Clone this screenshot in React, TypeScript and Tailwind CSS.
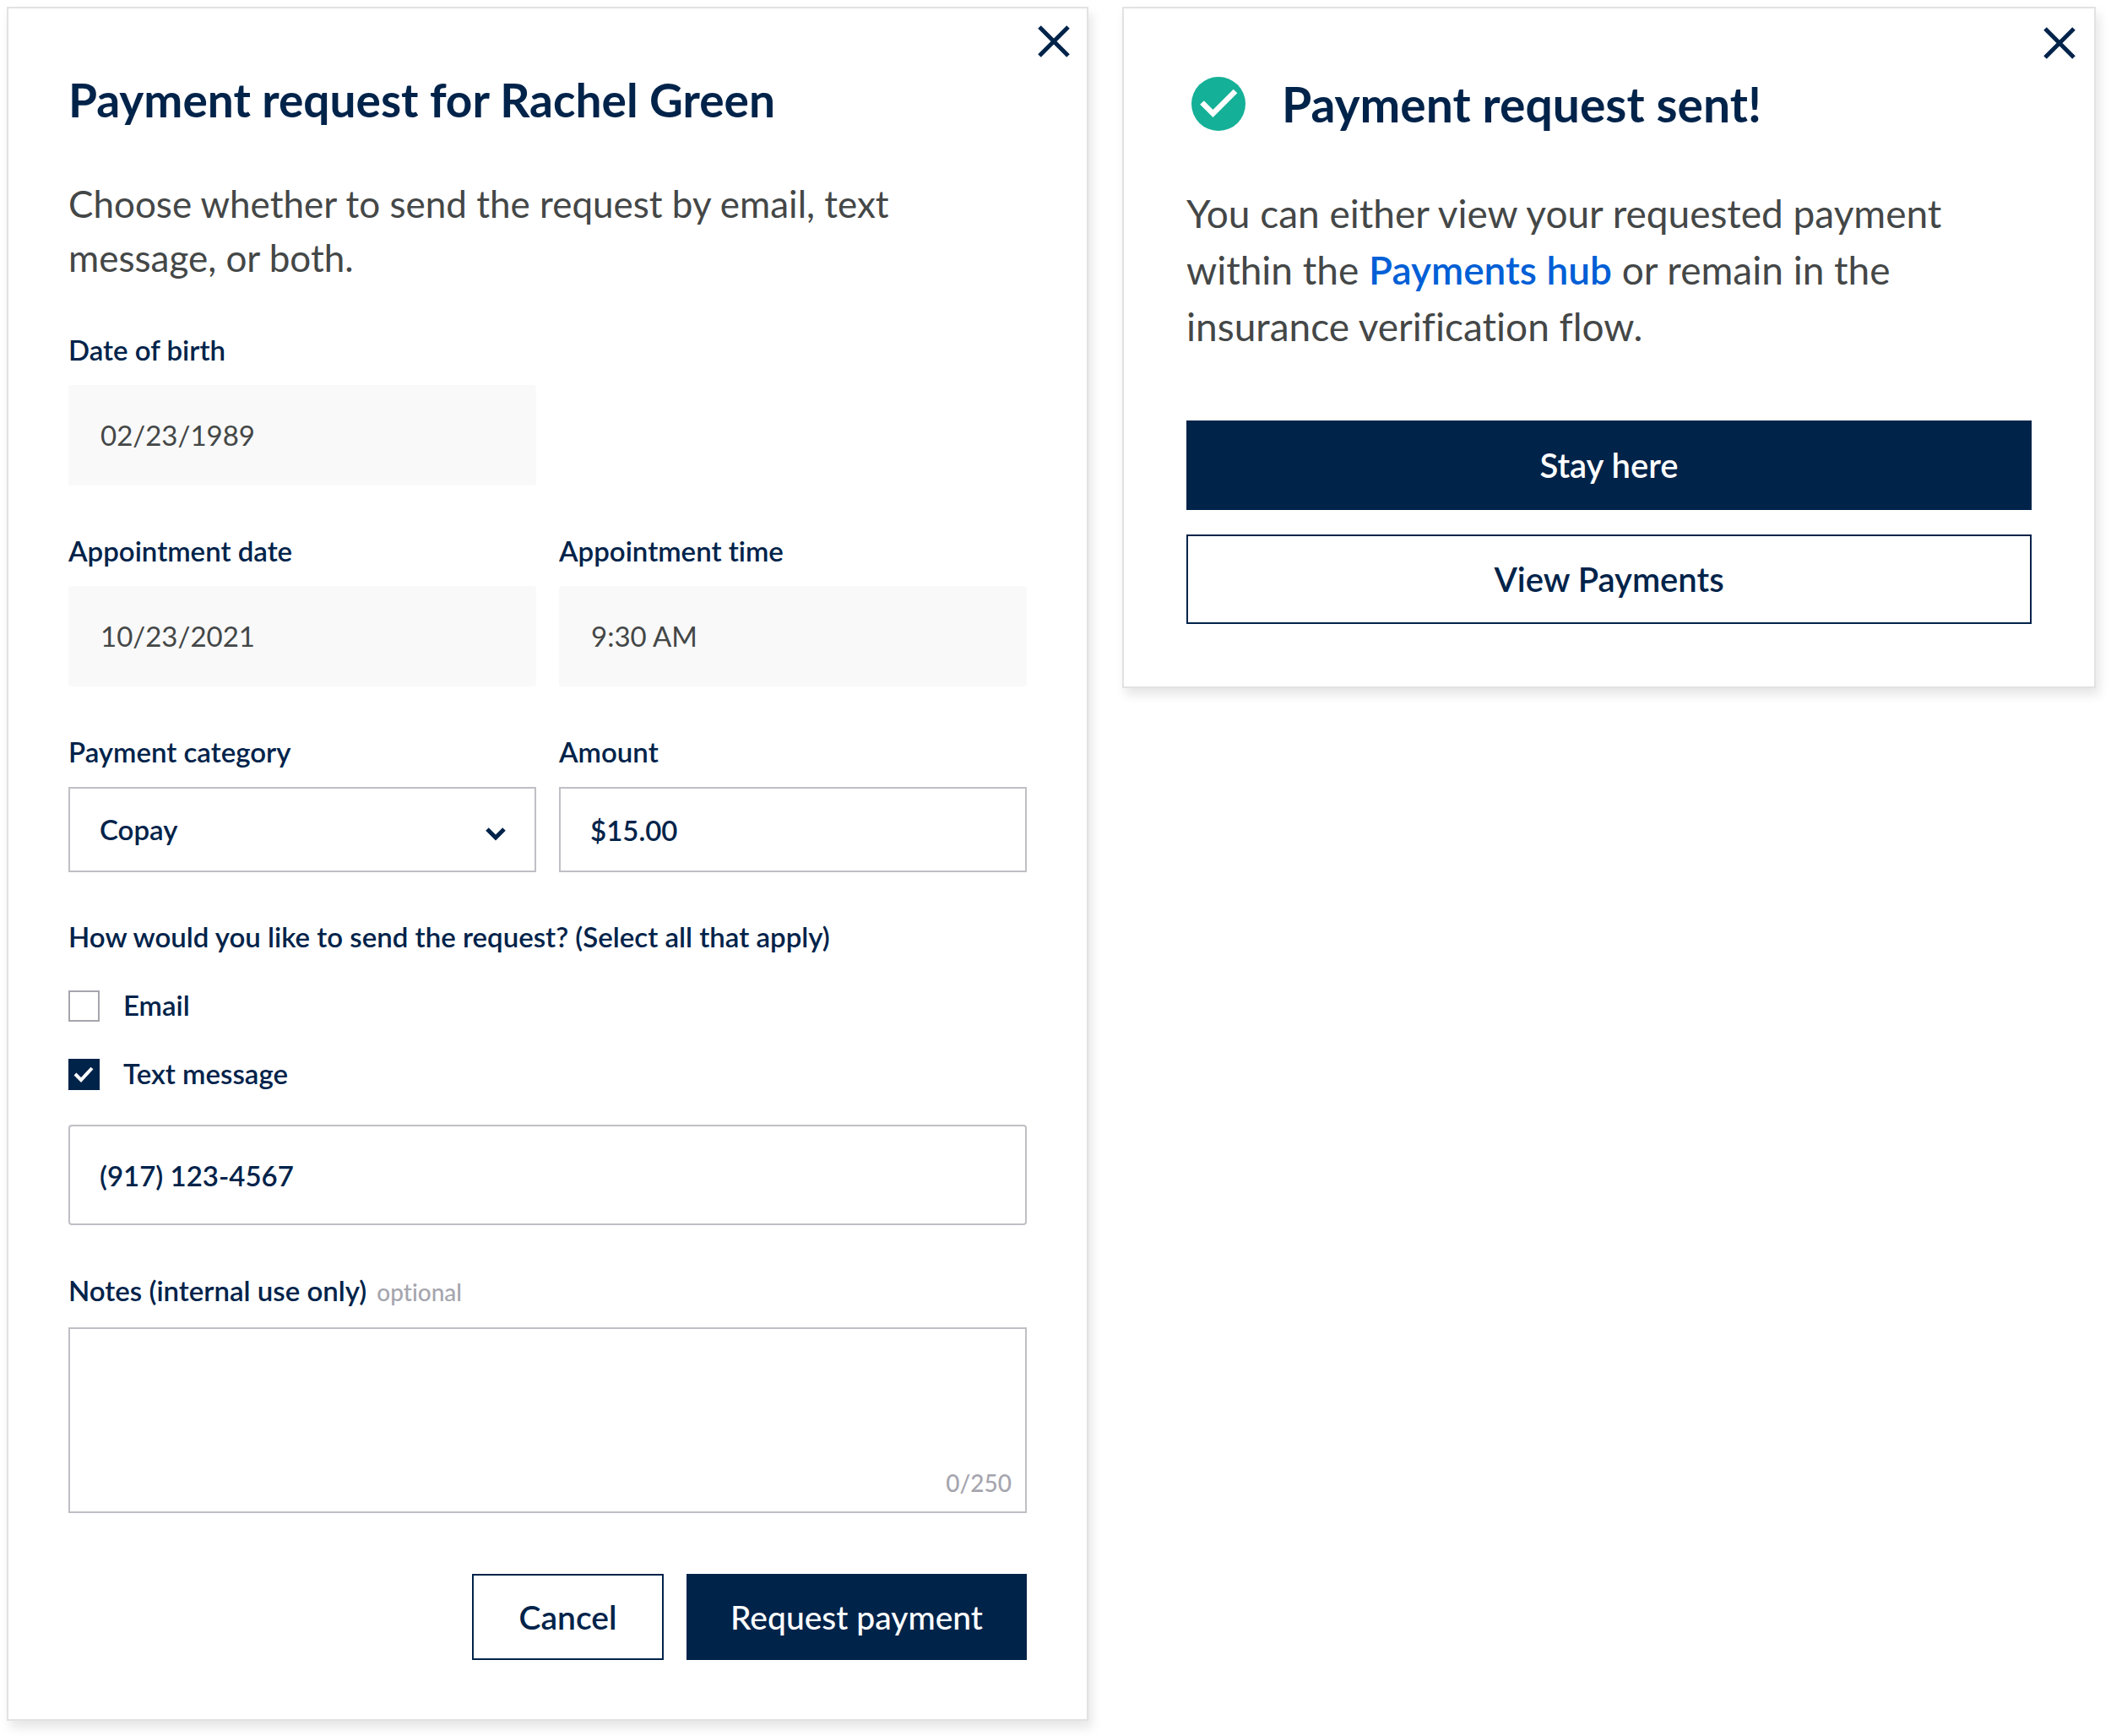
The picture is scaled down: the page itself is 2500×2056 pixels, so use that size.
import { useState, type ReactNode } from 'react'

const READONLY =
  'h-[119px] w-full rounded-[4px] bg-[#f9f9f9] px-[38px] pb-0.5 text-[33px] text-[#444747] outline-none'
const BORDERED =
  'w-full border-2 border-[#bfbfc5] bg-white px-[35px] text-[33px] font-semibold text-[#00234a] outline-none'

function CloseButton() {
  return (
    <button type="button" aria-label="Close" className="block size-[38px] cursor-pointer text-[#00234a]">
      <svg viewBox="0 0 38 38" className="size-full" fill="none" stroke="currentColor" strokeWidth="5">
        <path d="M2 2L36 36M36 2L2 36" />
      </svg>
    </button>
  )
}

function Card({ children }: { children: ReactNode }) {
  return (
    <section className="border-2 border-[#e2e2e2] bg-white shadow-[4px_8px_12px_rgba(0,0,0,0.1)]">
      {children}
    </section>
  )
}

function Field({ id, label, hint, children }: { id: string; label: string; hint?: string; children: ReactNode }) {
  return (
    <div className="flex flex-col gap-[21px]">
      <div className="flex items-baseline gap-3">
        <label htmlFor={id} className="text-[33px] leading-[42px] font-semibold">
          {label}
        </label>
        {hint && <span className="text-[28px] leading-[42px] font-medium text-[#a5a5ae]">{hint}</span>}
      </div>
      {children}
    </div>
  )
}

function CheckRow({ id, label, checked }: { id: string; label: string; checked?: boolean }) {
  return (
    <div className="flex h-10 items-end gap-7">
      <div className="relative size-[37px]">
        <input
          id={id}
          type="checkbox"
          defaultChecked={checked}
          className="peer block size-[37px] appearance-none border-2 border-[#a5a5ae] bg-white checked:border-[#00234a] checked:bg-[#00234a]"
        />
        <svg
          viewBox="0 0 37 37"
          className="pointer-events-none absolute inset-0 hidden size-full peer-checked:block"
          fill="none"
          stroke="white"
          strokeWidth="4"
        >
          <path d="M8 18L15 25L28 11" />
        </svg>
      </div>
      <label htmlFor={id} className="text-[33px] leading-[40px] font-semibold">
        {label}
      </label>
    </div>
  )
}

function RequestForm() {
  const [notes, setNotes] = useState('')

  return (
    <Card>
      <div className="flex justify-end pt-5 pr-5">
        <CloseButton />
      </div>
      <form className="mt-[18px] flex flex-col gap-14 pr-[71px] pb-[70px] pl-[71px]">
        <div>
          <h1 className="text-[55px] leading-[64px] font-bold">Payment request for Rachel Green</h1>
          <p className="mt-[59px] max-w-[1020px] text-[44px] leading-[64px] text-[#444747]">
            Choose whether to send the request by email, text message, or both.
          </p>
        </div>

        <div className="grid grid-cols-2 gap-x-[27px] gap-y-14">
          <Field id="dob" label="Date of birth">
            <input id="dob" readOnly value="02/23/1989" className={READONLY} />
          </Field>
          <div />
          <Field id="appt-date" label="Appointment date">
            <input id="appt-date" readOnly value="10/23/2021" className={READONLY} />
          </Field>
          <Field id="appt-time" label="Appointment time">
            <input id="appt-time" readOnly value="9:30 AM" className={READONLY} />
          </Field>
          <Field id="category" label="Payment category">
            <div className="relative">
              <select id="category" className={`${BORDERED} block h-[101px] appearance-none`}>
                <option>Copay</option>
              </select>
              <svg
                viewBox="0 0 24 16"
                className="pointer-events-none absolute top-[48px] right-9 h-4 w-6"
                fill="none"
                stroke="#00234a"
                strokeWidth="5"
              >
                <path d="M2 2L12 12L22 2" />
              </svg>
            </div>
          </Field>
          <Field id="amount" label="Amount">
            <input id="amount" defaultValue="$15.00" className={`${BORDERED} h-[101px]`} />
          </Field>
        </div>

        <fieldset className="flex flex-col gap-[41px]">
          <legend className="mb-[41px] text-[33px] leading-[40px] font-semibold">
            How would you like to send the request? (Select all that apply)
          </legend>
          <CheckRow id="email" label="Email" />
          <CheckRow id="text" label="Text message" checked />
          <input
            type="tel"
            aria-label="Phone number"
            defaultValue="(917) 123-4567"
            className={`${BORDERED} h-[119px] rounded-[4px]`}
          />
        </fieldset>

        <Field id="notes" label="Notes (internal use only)" hint="optional">
          <div className="relative">
            <textarea
              id="notes"
              maxLength={250}
              value={notes}
              onChange={(e) => setNotes(e.target.value)}
              className={`${BORDERED} block h-[220px] resize-none py-6`}
            />
            <span className="pointer-events-none absolute right-[18px] bottom-[18px] text-[28px] leading-[36px] font-medium text-[#a5a5ae]">
              {notes.length}/250
            </span>
          </div>
        </Field>

        <div className="mt-4 flex justify-end gap-[27px]">
          <button type="button" className="h-[102px] w-[227px] border-2 border-[#00234a] text-[39px] font-semibold">
            Cancel
          </button>
          <button type="button" className="h-[102px] w-[403px] bg-[#00234a] text-[39px] font-medium text-white">
            Request payment
          </button>
        </div>
      </form>
    </Card>
  )
}

function SentCard() {
  return (
    <Card>
      <div className="flex justify-end pt-[22px] pr-[22px]">
        <CloseButton />
      </div>
      <div className="mt-[21px] px-[74px] pb-[74px]">
        <div className="flex items-center gap-[43px] pl-1.5">
          <svg viewBox="0 0 64 64" className="size-16" fill="none">
            <circle cx="32" cy="32" r="32" fill="#14b097" />
            <path d="M12.5 30.5L25.500 43.500L52 17" stroke="white" strokeWidth="6.5" />
          </svg>
          <h2 className="text-[57px] leading-[64px] font-bold">Payment request sent!</h2>
        </div>
        <p className="mt-16 max-w-[960px] text-[46px] leading-[67px] text-[#444747]">
          You can either view your requested payment within the{' '}
          <a href="#payments" className="font-semibold text-[#005fd6]">
            Payments hub
          </a>{' '}
          or remain in the insurance verification flow.
        </p>
        <div className="mt-[78px] flex flex-col gap-[29px]">
          <button type="button" className="h-[106px] bg-[#00234a] text-[40px] font-semibold text-white">
            Stay here
          </button>
          <button type="button" className="h-[106px] border-2 border-[#00234a] text-[40px] font-semibold">
            View Payments
          </button>
        </div>
      </div>
    </Card>
  )
}

export default function App() {
  return (
    <main className="grid min-h-screen grid-cols-[1281fr_1153fr] items-start gap-10 bg-white pt-2 pr-[18px] pb-4 pl-2 font-[Lato,sans-serif] text-[#00234a] [font-variant-ligatures:none]">
      <RequestForm />
      <SentCard />
    </main>
  )
}
